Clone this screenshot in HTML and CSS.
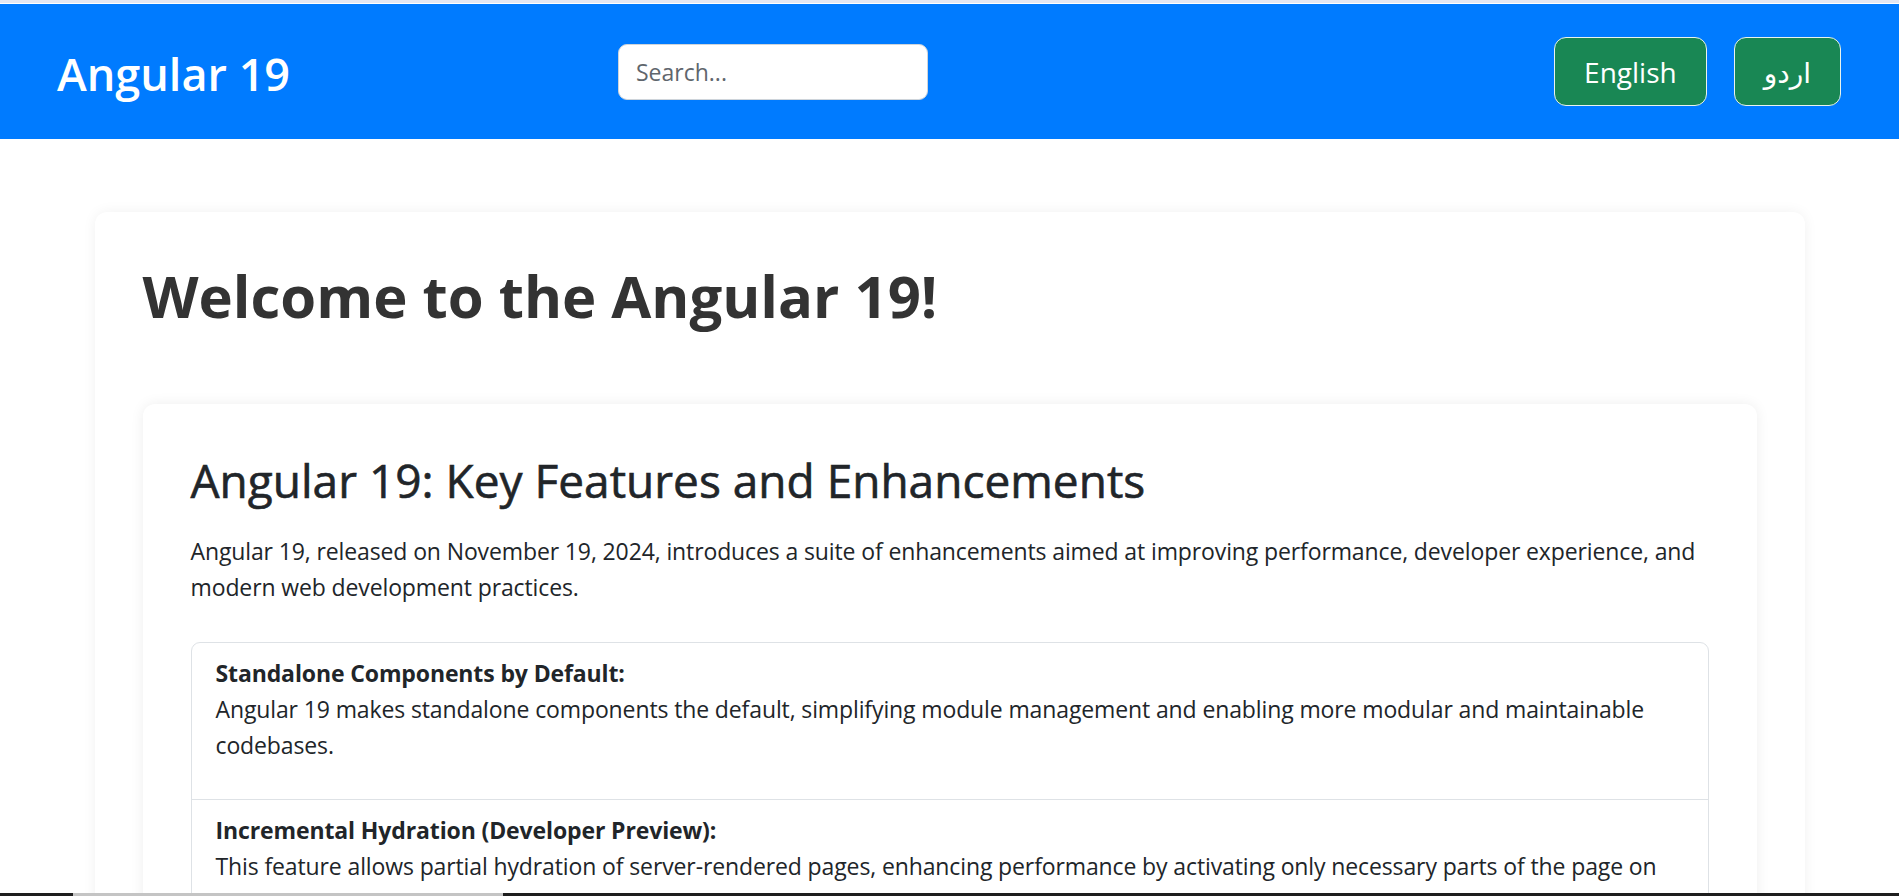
FILE: index.html
```html
<!DOCTYPE html>
<html lang="en">
<head>
<meta charset="utf-8">
<title>Angular 19</title>
<link rel="stylesheet" href="styles.css">
</head>
<body>
<div class="topline"></div>
<nav class="navbar">
  <a class="brand" href="#">Angular 19</a>
  <input class="search" type="text" placeholder="Search...">
  <div class="lang-switch">
    <button class="btn-lang" type="button">English</button>
    <button class="btn-lang" type="button" lang="ur" dir="rtl">اردو</button>
  </div>
</nav>
<main class="container">
  <section class="card-outer">
    <h1 class="page-title">Welcome to the Angular 19!</h1>
    <article class="card-inner">
      <h2 class="card-title">Angular 19: Key Features and Enhancements</h2>
      <p class="intro">Angular 19, released on November 19, 2024, introduces a suite of enhancements aimed at improving performance, developer experience, and modern web development practices.</p>
      <ul class="list-group">
        <li class="list-item">
          <strong>Standalone Components by Default:</strong>
          <p>Angular 19 makes standalone components the default, simplifying module management and enabling more modular and maintainable codebases.</p>
        </li>
        <li class="list-item">
          <strong>Incremental Hydration (Developer Preview):</strong>
          <p>This feature allows partial hydration of server-rendered pages, enhancing performance by activating only necessary parts of the page on demand.</p>
        </li>
        <li class="list-item">
          <strong>Signals Enhancements:</strong>
          <p>New signal-based APIs improve reactivity and change detection, making state management simpler and more efficient.</p>
        </li>
        <li class="list-item">
          <strong>Route-Level Render Mode:</strong>
          <p>Developers can configure how each route is rendered on the server, on the client, or prerendered at build time.</p>
        </li>
      </ul>
    </article>
  </section>
</main>
<div class="taskbar"></div>
</body>
</html>
```

FILE: styles.css
```css
html {
  scrollbar-width: none;
}

body {
  margin: 0;
  background: #ffffff;
  color: #212529;
  font-family: "Open Sans", "DejaVu Sans", sans-serif;
  font-size: 23px;
  line-height: 36px;
  letter-spacing: -0.12px;
}

.topline {
  height: 3px;
  background: #e4e7f2;
  border-bottom: 1px solid #ffffff;
}

.navbar {
  display: grid;
  grid-template-columns: 561px 310px 1fr;
  align-items: center;
  height: 135px;
  padding: 0 58px 0 57px;
  background: #007bff;
}

.brand {
  color: #ffffff;
  text-decoration: none;
  font-size: 45px;
  font-weight: 600;
  line-height: 60px;
  letter-spacing: 0;
  margin-top: 4px;
}

.search {
  box-sizing: border-box;
  width: 310px;
  height: 56px;
  padding: 0 17px;
  border: 1px solid #ced4da;
  border-radius: 9px;
  background: #ffffff;
  font-family: inherit;
  font-size: 23px;
  color: #212529;
  outline: none;
}

.search::placeholder {
  color: #5f666d;
}

.lang-switch {
  justify-self: end;
  display: flex;
  gap: 27px;
}

.btn-lang {
  box-sizing: border-box;
  height: 69px;
  padding: 0 29px;
  border: 1px solid #e9f3ee;
  border-radius: 12px;
  background: #198754;
  color: #ffffff;
  font-family: inherit;
  font-size: 28px;
  line-height: 1;
  cursor: pointer;
}

.container {
  width: 1710px;
  margin: 73px auto 0;
}

.card-outer {
  padding: 48px;
  background: #ffffff;
  border-radius: 12px;
  box-shadow: 0 0 14px rgba(0, 0, 0, 0.06);
}

.page-title {
  margin: 0 0 72px;
  color: #333333;
  font-size: 58px;
  font-weight: 700;
  line-height: 72px;
  letter-spacing: 0;
}

.card-inner {
  padding: 48px;
  background: #ffffff;
  border-radius: 12px;
  box-shadow: 0 0 14px rgba(0, 0, 0, 0.07);
}

.card-title {
  margin: 0 0 23px;
  color: #212529;
  font-size: 46px;
  font-weight: 500;
  line-height: 57.6px;
  letter-spacing: 0;
  -webkit-text-stroke: 0.6px currentColor;
}

.intro {
  margin: 0 0 37px;
}

.list-group {
  margin: 0;
  padding: 0;
  list-style: none;
  border: 1px solid #dee2e6;
  border-radius: 9px;
}

.list-item {
  padding: 12px 24px;
  border-top: 1px solid #dee2e6;
}

.list-item:first-child {
  border-top: none;
}

.list-item strong {
  display: block;
  font-weight: 700;
}

.list-item p {
  margin: 0 0 24px;
}

.taskbar {
  position: fixed;
  left: 0;
  right: 0;
  bottom: 0;
  height: 3px;
  background: linear-gradient(to right, #1e1e1e 0, #1e1e1e 73px, #c4c4c4 73px, #c4c4c4 503px, #1e1e1e 503px);
}
```
